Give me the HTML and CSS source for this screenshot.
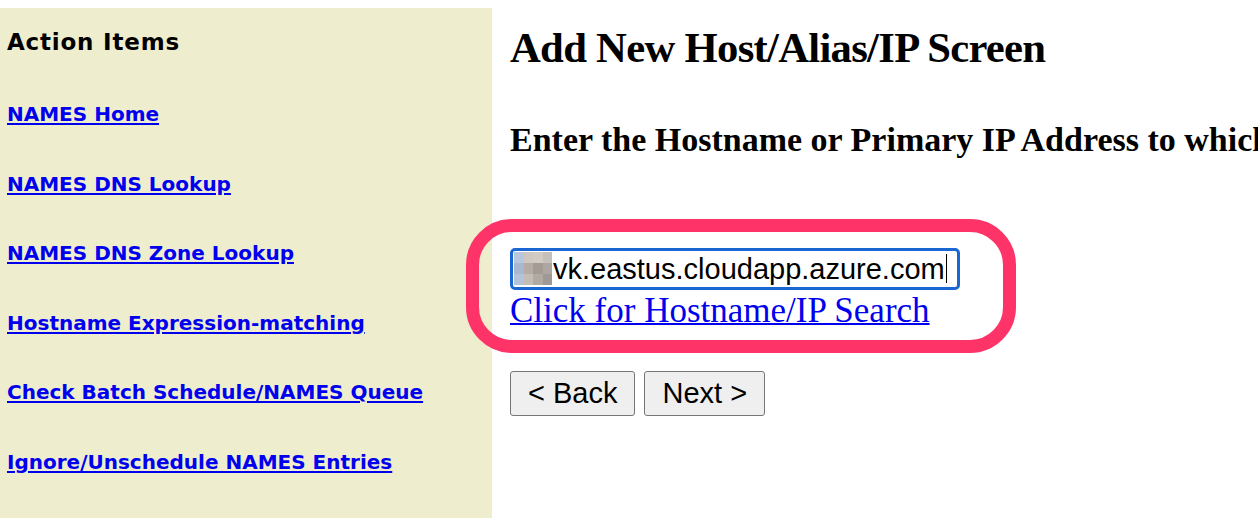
FILE: index.html
```html
<!DOCTYPE html>
<html>
<head>
<meta charset="utf-8">
<link rel="stylesheet" href="styles.css">
</head>
<body>
<div class="page">
  <nav class="sidebar">
    <div class="side-title">Action Items</div>
    <a class="side-link" href="#">NAMES Home</a>
    <a class="side-link" href="#">NAMES DNS Lookup</a>
    <a class="side-link" href="#">NAMES DNS Zone Lookup</a>
    <a class="side-link" href="#">Hostname Expression-matching</a>
    <a class="side-link" href="#">Check Batch Schedule/NAMES Queue</a>
    <a class="side-link" href="#">Ignore/Unschedule NAMES Entries</a>
  </nav>
  <main class="main">
    <h1 class="title">Add New Host/Alias/IP Screen</h1>
    <h2 class="subtitle">Enter the Hostname or Primary IP Address to which</h2>
    <div class="entry">
      <div class="field">
        <span class="redact">
          <i class="c1"></i><i class="c2"></i><i class="c3"></i><i class="c4"></i>
          <i class="c5"></i><i class="c6"></i><i class="c7"></i><i class="c8"></i>
          <i class="c9"></i><i class="c10"></i><i class="c11"></i><i class="c12"></i>
        </span>
        <span class="value">vk.eastus.cloudapp.azure.com</span><span class="caret"></span>
      </div>
      <a class="search-link" href="#">Click for Hostname/IP Search</a>
      <div class="highlight"></div>
    </div>
    <div class="buttons">
      <button class="btn back">&lt; Back</button>
      <button class="btn next">Next &gt;</button>
    </div>
  </main>
</div>
</body>
</html>
```
FILE: styles.css
```css
html, body {
  margin: 0;
  padding: 0;
  background: #ffffff;
  overflow: hidden;
}
body {
  padding-top: 8px;
  height: 510px;
  width: 1258px;
}
.page {
  display: flex;
  height: 510px;
}
.sidebar {
  width: 485px;
  flex: 0 0 485px;
  background: #eeedce;
  padding-left: 7px;
  display: flex;
  flex-direction: column;
  font-family: "DejaVu Sans", Verdana, sans-serif;
  font-weight: bold;
}
.side-title {
  font-size: 23px;
  line-height: 26px;
  margin-top: 21px;
  color: #000;
  letter-spacing: 0.8px;
}
.side-link {
  font-size: 20px;
  line-height: 24px;
  color: #0000ee;
  margin-top: 45.6px;
  align-self: flex-start;
  text-decoration-thickness: 2px;
  text-underline-offset: 2px;
}
.side-title + .side-link { margin-top: 47px; }
.main {
  flex: 1;
  padding-left: 18px;
  min-width: 0;
  white-space: nowrap;
  font-family: "Liberation Serif", "Times New Roman", serif;
}
.title {
  font-size: 42.67px;
  line-height: 50px;
  margin: 15px 0 0 0;
  font-weight: bold;
  letter-spacing: -0.7px;
}
.subtitle {
  font-size: 34px;
  line-height: 38px;
  margin: 47.5px 0 0 0;
  font-weight: bold;
}
.entry {
  position: relative;
  margin-top: 89px;
  width: 450px;
}
.field {
  box-sizing: border-box;
  width: 450px;
  height: 42px;
  border: 3px solid #1a66d2;
  border-radius: 5px;
  display: flex;
  align-items: center;
  padding-left: 1px;
  font-family: "Liberation Sans", Arial, sans-serif;
  font-size: 29px;
  color: #000;
}
.redact {
  display: grid;
  grid-template-columns: repeat(4, 1fr);
  grid-template-rows: repeat(3, 1fr);
  width: 38px;
  height: 33px;
  flex: 0 0 38px;
  margin-right: 1px;
}
.redact i { display: block; }
.c1 { background: #b9c7dc; }
.c2 { background: #cfc8c0; }
.c3 { background: #d2cbc4; }
.c4 { background: #c6c0ba; }
.c5 { background: #a7b8d0; }
.c6 { background: #b6aca3; }
.c7 { background: #a49b94; }
.c8 { background: #aea7a1; }
.c9 { background: #b4c3d8; }
.c10 { background: #c4bdb6; }
.c11 { background: #b1aaa3; }
.c12 { background: #9e9994; }
.value {
  line-height: 32px;
}
.caret {
  display: inline-block;
  width: 1.5px;
  height: 29px;
  background: #000;
  margin-left: 1px;
}
.search-link {
  display: block;
  width: max-content;
  margin-top: 2px;
  font-size: 35px;
  line-height: 38px;
  color: #0000ee;
  text-decoration-thickness: 1.5px;
}
.highlight {
  position: absolute;
  left: -44px;
  top: -29px;
  width: 550px;
  height: 134px;
  box-sizing: border-box;
  border: 13px solid #fe3469;
  border-radius: 46px;
  pointer-events: none;
}
.buttons {
  display: flex;
  gap: 9px;
  margin-top: 41px;
}
.btn {
  height: 45px;
  padding: 0 17px;
  background: #efefef;
  border: 1px solid #767676;
  border-radius: 3px;
  font-family: "Liberation Sans", Arial, sans-serif;
  font-size: 29px;
  color: #000;
}
```
